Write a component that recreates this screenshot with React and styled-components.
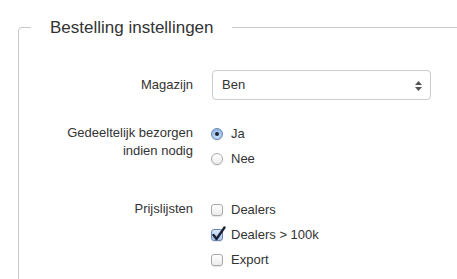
import styled, { createGlobalStyle } from "styled-components";

const GlobalStyle = createGlobalStyle`
  html, body {
    margin: 0;
    padding: 0;
    background: #ffffff;
    overflow: hidden;
  }
  body {
    font-family: "Helvetica Neue", "Liberation Sans", Arial, sans-serif;
    font-size: 13px;
    color: #333333;
  }
`;

const Fieldset = styled.fieldset`
  margin: 15px 0 0 18px;
  padding: 0 0 40px 0;
  width: 520px;
  border: 1px solid #c9c9c9;
  border-radius: 4px;
`;

const Legend = styled.legend`
  margin-left: 12px;
  padding: 0 18px 0 19px;
  font-size: 17px;
  line-height: 25px;
  color: #333333;
`;

const Form = styled.div`
  padding-top: 30px;
  display: flex;
  flex-direction: column;
`;

const Row = styled.div`
  display: grid;
  grid-template-columns: 174px 220px;
  column-gap: 18px;
  margin-top: ${(p) => p.$top || 0}px;
`;

const Label = styled.div`
  text-align: right;
  line-height: ${(p) => (p.$tall ? "30px" : "18px")};
  padding-top: ${(p) => (p.$tall ? 0 : 3)}px;
`;

const Select = styled.div`
  position: relative;
  height: 30px;
  margin-left: 1px;
  box-sizing: border-box;
  border: 1px solid #cccccc;
  border-radius: 4px;
  padding-left: 9px;
  line-height: 28px;
  background: #ffffff;
`;

const Arrows = styled.svg`
  position: absolute;
  right: 8px;
  top: 10px;
`;

const Options = styled.div`
  display: flex;
  flex-direction: column;
`;

const Option = styled.label`
  display: flex;
  align-items: center;
  height: 25px;
  gap: 8px;
`;

const Radio = styled.span`
  position: relative;
  width: 12px;
  height: 12px;
  box-sizing: border-box;
  border-radius: 50%;
  border: 1px solid ${(p) => (p.$on ? "#6a86b4" : "#a9a9a9")};
  background: ${(p) =>
    p.$on
      ? "radial-gradient(circle at 50% 70%, #cfe2fb 0%, #9dc1ee 60%, #7aa6e0 100%)"
      : "linear-gradient(#ffffff, #ececec)"};
  box-shadow: 0 1px 1px rgba(0, 0, 0, 0.1);

  &::after {
    content: "";
    display: ${(p) => (p.$on ? "block" : "none")};
    position: absolute;
    left: 3px;
    top: 3px;
    width: 4px;
    height: 4px;
    border-radius: 50%;
    background: #1d2430;
  }
`;

const Box = styled.span`
  position: relative;
  width: 12px;
  height: 12px;
  box-sizing: border-box;
  border-radius: 3px;
  border: 1px solid ${(p) => (p.$on ? "#6a86b4" : "#a9a9a9")};
  background: ${(p) =>
    p.$on
      ? "linear-gradient(#d6e6fb, #a9c8f0)"
      : "linear-gradient(#ffffff, #ececec)"};
  box-shadow: 0 1px 1px rgba(0, 0, 0, 0.1);
`;

const Check = styled.svg`
  position: absolute;
  left: 0px;
  top: -4px;
`;

function RadioOption({ on, children }) {
  return (
    <Option>
      <Radio $on={on} />
      {children}
    </Option>
  );
}

function CheckOption({ on, children }) {
  return (
    <Option>
      <Box $on={on}>
        {on && (
          <Check width="14" height="15" viewBox="0 0 14 15">
            <path
              d="M1.5 9 L4.5 13 L12.5 1.5"
              fill="none"
              stroke="#1b2233"
              strokeWidth="2.4"
              strokeLinecap="round"
              strokeLinejoin="round"
            />
          </Check>
        )}
      </Box>
      {children}
    </Option>
  );
}

export default function App() {
  return (
    <>
      <GlobalStyle />
      <Fieldset>
        <Legend>Bestelling instellingen</Legend>
        <Form>
          <Row>
            <Label $tall>Magazijn</Label>
            <Select>
              Ben
              <Arrows width="7" height="10" viewBox="0 0 7 10">
                <path d="M3.5 0 L7 4 L0 4 Z" fill="#555" />
                <path d="M0 6 L7 6 L3.5 10 Z" fill="#555" />
              </Arrows>
            </Select>
          </Row>
          <Row $top={21}>
            <Label>
              Gedeeltelijk bezorgen
              <br />
              indien nodig
            </Label>
            <Options>
              <RadioOption on>Ja</RadioOption>
              <RadioOption>Nee</RadioOption>
            </Options>
          </Row>
          <Row $top={26}>
            <Label>Prijslijsten</Label>
            <Options>
              <CheckOption>Dealers</CheckOption>
              <CheckOption on>Dealers &gt; 100k</CheckOption>
              <CheckOption>Export</CheckOption>
            </Options>
          </Row>
        </Form>
      </Fieldset>
    </>
  );
}
